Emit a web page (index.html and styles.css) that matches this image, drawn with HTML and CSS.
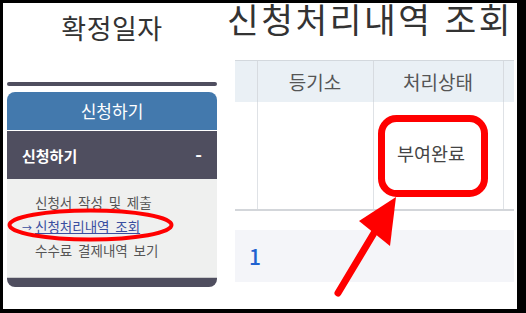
FILE: index.html
```html
<!DOCTYPE html>
<html lang="ko">
<head>
  <meta charset="UTF-8">
  <title>신청처리내역 조회</title>
  <link rel="stylesheet" href="styles.css">
</head>
<body>
  <div class="frame">
    <div class="side">
      <div class="side-title">확정일자</div>
      <div class="side-bar"></div>
      <div class="menu-head">신청하기</div>
      <div class="menu-group">
        <span>신청하기</span>
        <span class="toggle">-</span>
      </div>
      <ul class="menu-list">
        <li>신청서 작성 및 제출</li>
        <li class="active"><span class="arrow">→</span><a href="#">신청처리내역 조회</a></li>
        <li>수수료 결제내역 보기</li>
      </ul>
      <div class="menu-foot"></div>
    </div>

    <div class="main">
      <h1 class="page-title">신청처리내역 조<span>회</span></h1>
      <table class="result">
        <thead>
          <tr>
            <th class="c1"></th>
            <th class="c2">등기소</th>
            <th class="c3">처리상태</th>
            <th class="c4"></th>
          </tr>
        </thead>
        <tbody>
          <tr>
            <td></td>
            <td></td>
            <td class="status">부여완료</td>
            <td></td>
          </tr>
        </tbody>
      </table>
      <div class="paging"><a href="#">1</a></div>
    </div>
  </div>

  <!-- red annotations drawn over the screenshot -->
  <svg class="marks" width="526" height="313" viewBox="0 0 526 313">
    <ellipse cx="90.5" cy="225" rx="81" ry="14.5" fill="none" stroke="#ff0000" stroke-width="4"/>
    <rect x="381.5" y="118.5" width="103" height="75" rx="15" fill="none" stroke="#ff0000" stroke-width="7"/>
    <line x1="338" y1="293" x2="377" y2="228" stroke="#ff0000" stroke-width="7" stroke-linecap="round"/>
    <polygon points="359,221 396,197 390,246" fill="#ff0000"/>
  </svg>
</body>
</html>
```

FILE: styles.css
```css
* {
  margin: 0;
  padding: 0;
  box-sizing: border-box;
}

html, body {
  height: 100%;
  overflow: hidden;
}

body {
  position: relative;
  background: #000;
  padding: 3px 9px 4px 3px;
  font-family: "Noto Sans CJK KR", "Noto Sans", sans-serif;
  color: #333;
}

.frame {
  display: flex;
  height: 100%;
  background: #fff;
}

/* left menu */
.side {
  width: 210px;
  margin-left: 4px;
  flex-shrink: 0;
}

.side-title {
  margin-top: 10px;
  height: 30px;
  line-height: 30px;
  font-size: 27px;
  letter-spacing: 0.5px;
  text-align: center;
  color: #333;
}

.side-bar {
  margin-top: 39px;
  height: 4px;
  border-radius: 2px;
  background: #4f4e5f;
}

.menu-head {
  margin-top: 6px;
  height: 39px;
  line-height: 38px;
  border-radius: 8px 8px 0 0;
  border-bottom: 1px solid #fff;
  background: #4379ad;
  color: #fff;
  font-size: 17px;
  text-align: center;
}

.menu-group {
  display: flex;
  justify-content: space-between;
  align-items: center;
  height: 48px;
  padding: 0 15px;
  background: #4f4e5f;
  color: #fff;
  font-size: 15px;
  font-weight: bold;
}

.menu-group .toggle {
  font-size: 18px;
}

.menu-list {
  list-style: none;
  background: #eff0ef;
  padding: 11px 0 15px 28px;
  border-bottom: 1px solid #c9cacb;
}

.menu-list li {
  height: 24px;
  line-height: 24px;
  font-size: 13.5px;
  color: #555;
  word-spacing: 2px;
}

.menu-list .arrow {
  display: inline-block;
  width: 13px;
  margin-left: -13px;
  font-size: 10px;
  color: #3a4ea0;
}

.menu-list a {
  color: #3a4ea0;
  text-decoration: underline;
}

.menu-foot {
  height: 9px;
  border-radius: 0 0 8px 8px;
  background: #4f4e5f;
}

/* right content */
.main {
  flex: 1;
  margin-left: 10px;
  min-width: 0;
}

.page-title {
  height: 36px;
  line-height: 30px;
  font-size: 34.5px;
  font-weight: normal;
  letter-spacing: 2.5px;
  white-space: nowrap;
  color: #333;
}

.page-title span {
  letter-spacing: 0;
}

.result {
  margin-top: 21px;
  margin-left: 8px;
  width: 279px;
  border-collapse: collapse;
  table-layout: fixed;
}

.result th {
  height: 41px;
  background: #eaf0f5;
  border-top: 1px solid #d3d8dd;
  border-left: 1px solid #d7dbe0;
  font-size: 19px;
  font-weight: normal;
  color: #555;
}

.result td {
  height: 108px;
  border-left: 1px solid #dfe2e6;
  border-bottom: 2px solid #d3d6da;
  text-align: center;
  font-size: 18px;
  color: #444;
  padding-bottom: 4px;
}

.result td.status {
  font-size: 18.5px;
  padding-right: 14px;
}

.result th:first-child,
.result td:first-child {
  border-left: none;
}

.c1 { width: 22px; }
.c2 { width: 116px; }
.c3 { width: 130px; }
.c4 { width: 11px; }

.paging {
  margin-top: 19px;
  margin-left: 8px;
  width: 279px;
  height: 52px;
  line-height: 52px;
  padding-left: 14px;
  background: #f4f5f9;
}

.paging a {
  font-size: 21px;
  font-weight: 500;
  color: #1f62d0;
  text-decoration: none;
}

.marks {
  position: absolute;
  left: 0;
  top: 0;
}
```
